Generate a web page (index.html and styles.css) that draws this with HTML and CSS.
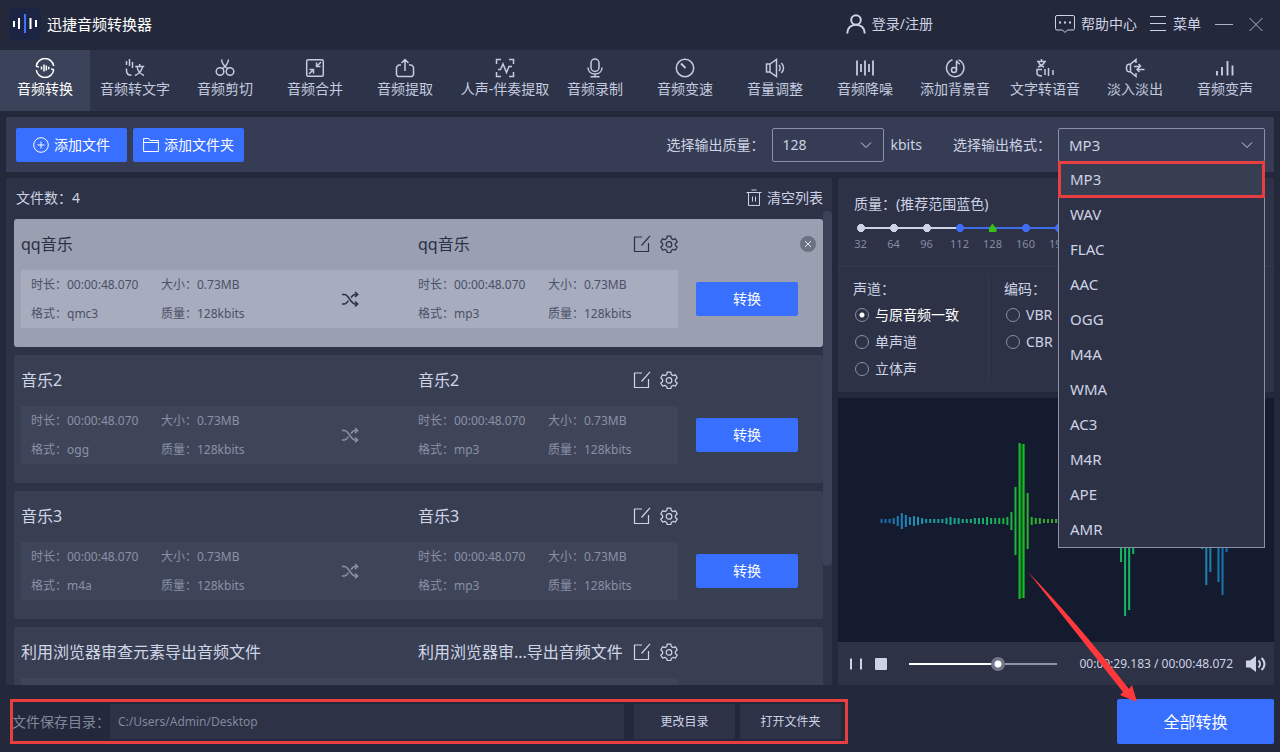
FILE: index.html
```html
<!DOCTYPE html>
<html lang="zh-CN">
  <head>
    <meta charset="utf-8">
    <title>迅捷音频转换器</title>
    <link rel="stylesheet" href="styles.css">
  </head>
  <body>
    <!-- icon sprite -->
    <svg class="sprite" aria-hidden="true">
      <symbol id="i-convert" viewBox="0 0 20 20"><path d="M1.300 8a8.800 8.800 0 0 1 17.400 0M18.700 12a8.800 8.800 0 0 1-17.400 0M1 8.300l2.800.7M19 11.700l-2.800-.7M6.500 8.500v3M9 6.500v7M11.300 7.500v5M13.700 8.700v2.600"/></symbol>
      <symbol id="i-totext" viewBox="0 0 20 20"><path d="M1.500 3v4M4.500 1v7M7.500 4v6M1.500 10.500v2c0 3 1.800 4.800 5 4.800M10.200 8.500h9M14.700 6v2.500M12 8.500c.6 4 3.500 7.500 7 9M17.500 8.500c-.6 4-4 7.500-7.500 9"/></symbol>
      <symbol id="i-cut" viewBox="0 0 20 20"><circle cx="5" cy="13.500" r="3.800"/><circle cx="15" cy="13.500" r="3.800"/><path d="M6.500 1.500c.3 3.500 2.500 6.500 6 9.200M13.500 1.500c-.3 3.500-2.500 6.500-6 9.200"/></symbol>
      <symbol id="i-merge" viewBox="0 0 20 20"><rect x="1.700" y="1.700" width="16.600" height="16.600" rx="1.500"/><path d="M16 4l-4.500 4.500M11.500 4.500v4h4M4 16l4.500-4.500M8.500 15.500v-4h-4"/></symbol>
      <symbol id="i-extract" viewBox="0 0 20 20"><path d="M6 7H3.500L1.500 9v8l1.500 1.500h14l1.500-1.500V9l-2-2H14M10 13V1.500M6.500 5L10 1.500 13.500 5"/></symbol>
      <symbol id="i-vocal" viewBox="0 0 20 20"><path d="M1.500 6V1.500H6M14 1.500h4.500V6M18.500 14v4.500H14M6 18.500H1.500V14M3 11.500h2.500L8 6l3.500 8.500L14 8.500h3"/></symbol>
      <symbol id="i-mic" viewBox="0 0 20 20"><rect x="6" y="1" width="8" height="12.500" rx="4"/><path d="M3 9.500c0 4 3 6.500 7 6.500s7-2.500 7-6.500M10 16v2.500M5.500 18.700h9"/></symbol>
      <symbol id="i-speed" viewBox="0 0 20 20"><circle cx="10" cy="10" r="8.700"/><path d="M10.500 10L6 5.500" stroke-width="2"/></symbol>
      <symbol id="i-volume" viewBox="0 0 20 20"><path d="M5 6L11.500 1.500v17L5 14zM5 6H1.500v8H5M14 7c1.500 1.500 1.500 4.500 0 6M16.300 5c3 3 3 7 0 10"/></symbol>
      <symbol id="i-denoise" viewBox="0 0 20 20"><path d="M2 2.500v15M6 6v8M10 2.500v15M14 6v8M18 2.500v15" stroke-width="1.800"/></symbol>
      <symbol id="i-music" viewBox="0 0 20 20"><path d="M13.500 1.900A8.700 8.700 0 1 1 7.500 1.700M11.500 12V2.500c.5 2 1.500 3 3.500 3.500"/><circle cx="9" cy="12" r="2.500"/></symbol>
      <symbol id="i-tovoice" viewBox="0 0 20 20"><path d="M2 3.500h9M6.500 1v2.500M3.500 3.500c.6 2.500 2.500 4.500 5.500 5.500M9.500 3.500C9 6 6.500 8 3 9M7 11.500H2V15c0 2 1.500 3 5 3M10 11v6M13.500 10v8M18 12v5"/></symbol>
      <symbol id="i-fade" viewBox="0 0 20 20"><path d="M11 5V1.500L5.500 6 3 6.500Q1.500 7 1.500 10T3 13.500l2.500.5 5.500 4.500V15M5.500 6v8M9 8.500h7M13.500 6L16 8.500M19.500 11.500H12M14.500 9L12 11.500l2.500 2.500"/></symbol>
      <symbol id="i-bars" viewBox="0 0 20 20"><path d="M2 13v4.500M7 9v8.500M12.500 3v14.500M17.500 7.500v10" stroke-width="1.900"/></symbol>
      <symbol id="i-edit" viewBox="0 0 18 18"><path d="M9 2H1.500v14.500h14V8M8.500 10.500L17 .8"/></symbol>
      <symbol id="i-gear" viewBox="0 0 18 18"><path d="M7.200 1.200h3.600l.6 2.400 1.600.9 2.400-.7 1.800 3-1.800 1.700v1.900l1.800 1.700-1.800 3-2.400-.7-1.600.9-.6 2.200H7.200l-.6-2.200-1.600-.9-2.400.7-1.800-3 1.800-1.700V8.500L.8 6.800l1.800-3 2.400.7 1.600-.9z"/><circle cx="9" cy="9.400" r="2.800"/></symbol>
      <symbol id="i-shuffle" viewBox="0 0 18 18"><path d="M1 4.500h2.500c4 0 6.500 9.500 10.500 9.500h2.500M1 14h2.500c1.500 0 2.800-1.500 4-3.300M10 7.500c1.200-1.700 2.500-3 4-3h2.500M14 2l2.700 2.500L14 7M14 11.500l2.700 2.500-2.700 2.500"/></symbol>
      <symbol id="i-chevron" viewBox="0 0 12 12"><path d="M1 3.500l5 5 5-5"/></symbol>
    </svg>

    <header class="titlebar">
      <svg class="logo" viewBox="0 0 32 32" aria-hidden="true">
        <rect width="32" height="32" rx="6" fill="#1c2444"/>
        <path d="M5 13v6M10 10v11M21.500 10v11M27 12v7" stroke="#fff" stroke-width="2"/>
        <path d="M16 6v19" stroke="#3d73ff" stroke-width="2"/>
      </svg>
      <h1 class="app-name">迅捷音频转换器</h1>
      <button class="bar-btn login"><svg viewBox="0 0 20 20" stroke-width="2"><circle cx="10" cy="6" r="4.800"/><path d="M1.200 19.500c0-5.500 3.800-8.700 8.800-8.700s8.800 3.200 8.800 8.700"/></svg>登录/注册</button>
      <button class="bar-btn help"><svg viewBox="0 0 20 20"><path d="M2 1.500h16q1.500 0 1.500 1.500v11.500q0 1.500-1.500 1.500h-5.500L10 18.500 7.500 16H2q-1.500 0-1.500-1.500V3q0-1.500 1.500-1.500z"/><path d="M4 8.500h2M9 8.500h2M14 8.500h2" stroke-width="2"/></svg>帮助中心</button>
      <button class="bar-btn menu"><svg viewBox="0 0 18 20"><path d="M1 2.500h16M1 9.500h16M1 16.500h16"/></svg>菜单</button>
      <button class="win-btn" aria-label="最小化"><svg viewBox="0 0 18 18"><path d="M0 9.500h18"/></svg></button>
      <button class="win-btn" aria-label="关闭"><svg viewBox="0 0 18 18"><path d="M2.500 3l13 13M15.500 3l-13 13"/></svg></button>
    </header>

    <nav class="tools">
      <a class="tool active" href="#"><svg><use href="#i-convert"/></svg>音频转换</a>
      <a class="tool" href="#"><svg><use href="#i-totext"/></svg>音频转文字</a>
      <a class="tool" href="#"><svg><use href="#i-cut"/></svg>音频剪切</a>
      <a class="tool" href="#"><svg><use href="#i-merge"/></svg>音频合并</a>
      <a class="tool" href="#"><svg><use href="#i-extract"/></svg>音频提取</a>
      <a class="tool wide" href="#"><svg><use href="#i-vocal"/></svg>人声-伴奏提取</a>
      <a class="tool" href="#"><svg><use href="#i-mic"/></svg>音频录制</a>
      <a class="tool" href="#"><svg><use href="#i-speed"/></svg>音频变速</a>
      <a class="tool" href="#"><svg><use href="#i-volume"/></svg>音量调整</a>
      <a class="tool" href="#"><svg><use href="#i-denoise"/></svg>音频降噪</a>
      <a class="tool" href="#"><svg><use href="#i-music"/></svg>添加背景音</a>
      <a class="tool" href="#"><svg><use href="#i-tovoice"/></svg>文字转语音</a>
      <a class="tool" href="#"><svg><use href="#i-fade"/></svg>淡入淡出</a>
      <a class="tool" href="#"><svg><use href="#i-bars"/></svg>音频变声</a>
    </nav>

    <section class="toolbar">
      <button class="btn add"><svg viewBox="0 0 16 16"><circle cx="8" cy="8" r="7.300"/><path d="M8 4.500v7M4.500 8h7"/></svg>添加文件</button>
      <button class="btn add"><svg viewBox="0 0 16 16"><path d="M.6 14.500V1.500h5l1.500 2h8.300v11zM.6 5.500h14.800"/></svg>添加文件夹</button>
      <label class="out-label first" for="quality">选择输出质量：</label>
      <div class="select quality">
        <select id="quality"><option>128</option></select>
        <svg><use href="#i-chevron"/></svg>
      </div>
      <span class="unit">kbits</span>
      <label class="out-label" for="format">选择输出格式：</label>
      <div class="select format">
        <select id="format"><option>MP3</option></select>
        <svg><use href="#i-chevron"/></svg>
        <ul class="options" role="listbox" aria-label="输出格式">
          <li role="option" aria-selected="true" class="selected">MP3</li>
          <li role="option">WAV</li>
          <li role="option">FLAC</li>
          <li role="option">AAC</li>
          <li role="option">OGG</li>
          <li role="option">M4A</li>
          <li role="option">WMA</li>
          <li role="option">AC3</li>
          <li role="option">M4R</li>
          <li role="option">APE</li>
          <li role="option">AMR</li>
        </ul>
      </div>
    </section>

    <main class="main">
      <section class="files">
        <div class="files-head">
          <span>文件数：4</span>
          <button class="clear"><svg viewBox="0 0 16 18"><path d="M.5 3.500h15M5.500 1h5M2.500 3.500v13h11v-13M6.500 7.500v5M9.500 7.500v5"/></svg>清空列表</button>
        </div>
        <div class="list">
          <article class="card current">
            <div class="card-title">
              <h2 class="name">qq音乐</h2>
              <div class="target">
                <span class="name">qq音乐</span>
                <button class="icon-btn" aria-label="重命名"><svg><use href="#i-edit"/></svg></button>
                <button class="icon-btn" aria-label="设置"><svg><use href="#i-gear"/></svg></button>
              </div>
            </div>
            <button class="close" aria-label="移除"><svg viewBox="0 0 16 16"><path d="M5 5l6 6M11 5l-6 6"/></svg></button>
            <div class="info">
              <div class="meta">
                <span>时长：00:00:48.070</span><span>大小：0.73MB</span>
                <span>格式：qmc3</span><span>质量：128kbits</span>
              </div>
              <svg class="shuffle"><use href="#i-shuffle"/></svg>
              <div class="meta">
                <span>时长：00:00:48.070</span><span>大小：0.73MB</span>
                <span>格式：mp3</span><span>质量：128kbits</span>
              </div>
            </div>
            <button class="btn go">转换</button>
          </article>

          <article class="card">
            <div class="card-title">
              <h2 class="name">音乐2</h2>
              <div class="target">
                <span class="name">音乐2</span>
                <button class="icon-btn" aria-label="重命名"><svg><use href="#i-edit"/></svg></button>
                <button class="icon-btn" aria-label="设置"><svg><use href="#i-gear"/></svg></button>
              </div>
            </div>
            <div class="info">
              <div class="meta">
                <span>时长：00:00:48.070</span><span>大小：0.73MB</span>
                <span>格式：ogg</span><span>质量：128kbits</span>
              </div>
              <svg class="shuffle"><use href="#i-shuffle"/></svg>
              <div class="meta">
                <span>时长：00:00:48.070</span><span>大小：0.73MB</span>
                <span>格式：mp3</span><span>质量：128kbits</span>
              </div>
            </div>
            <button class="btn go">转换</button>
          </article>

          <article class="card">
            <div class="card-title">
              <h2 class="name">音乐3</h2>
              <div class="target">
                <span class="name">音乐3</span>
                <button class="icon-btn" aria-label="重命名"><svg><use href="#i-edit"/></svg></button>
                <button class="icon-btn" aria-label="设置"><svg><use href="#i-gear"/></svg></button>
              </div>
            </div>
            <div class="info">
              <div class="meta">
                <span>时长：00:00:48.070</span><span>大小：0.73MB</span>
                <span>格式：m4a</span><span>质量：128kbits</span>
              </div>
              <svg class="shuffle"><use href="#i-shuffle"/></svg>
              <div class="meta">
                <span>时长：00:00:48.070</span><span>大小：0.73MB</span>
                <span>格式：mp3</span><span>质量：128kbits</span>
              </div>
            </div>
            <button class="btn go">转换</button>
          </article>

          <article class="card">
            <div class="card-title">
              <h2 class="name">利用浏览器审查元素导出音频文件</h2>
              <div class="target">
                <span class="name">利用浏览器审...导出音频文件</span>
                <button class="icon-btn" aria-label="重命名"><svg><use href="#i-edit"/></svg></button>
                <button class="icon-btn" aria-label="设置"><svg><use href="#i-gear"/></svg></button>
              </div>
            </div>
            <div class="info"></div>
          </article>
        </div>
        <div class="scroll-thumb"></div>
      </section>

      <aside class="side">
        <section class="settings">
          <fieldset class="rates">
            <legend>质量：(推荐范围蓝色)</legend>
            <div class="scale">
              <label><input type="radio" name="rate">32</label>
              <label><input type="radio" name="rate">64</label>
              <label><input type="radio" name="rate">96</label>
              <label class="good"><input type="radio" name="rate">112</label>
              <label class="good"><input type="radio" name="rate" checked>128</label>
              <label class="good"><input type="radio" name="rate">160</label>
              <label class="good"><input type="radio" name="rate">192</label>
            </div>
          </fieldset>
          <div class="modes">
            <fieldset class="channel">
              <legend>声道：</legend>
              <label><input type="radio" name="channel" checked>与原音频一致</label>
              <label><input type="radio" name="channel">单声道</label>
              <label><input type="radio" name="channel">立体声</label>
            </fieldset>
            <fieldset class="encode">
              <legend>编码：</legend>
              <label><input type="radio" name="encode">VBR</label>
              <label><input type="radio" name="encode">CBR</label>
            </fieldset>
          </div>
        </section>

        <div class="wave">
          <svg id="wave" viewBox="0 0 436 244">
            <defs>
              <linearGradient id="tone" gradientUnits="userSpaceOnUse" x1="43" y1="0" x2="390" y2="0">
                <stop offset="0" stop-color="#1b68ae"/>
                <stop offset=".07" stop-color="#1b86b8"/>
                <stop offset=".14" stop-color="#1a9fa6"/>
                <stop offset=".26" stop-color="#16ac80"/>
                <stop offset=".36" stop-color="#1bb045"/>
                <stop offset=".4" stop-color="#1cbb2c"/>
                <stop offset=".5" stop-color="#46a331"/>
                <stop offset=".7" stop-color="#14b860"/>
                <stop offset=".93" stop-color="#1c84b0"/>
                <stop offset="1" stop-color="#1a6cb0"/>
              </linearGradient>
            </defs>
            <path d="M183.500 46v154" stroke="#0a5a1c" stroke-width="4"/>
            <path id="bars" stroke="url(#tone)" stroke-width="2"/>
          </svg>
        </div>

        <div class="player">
          <button class="icon-btn" aria-label="暂停"><svg viewBox="0 0 14 14"><path d="M2 1.500v11M12 1.500v11" stroke-width="2"/></svg></button>
          <button class="icon-btn stop" aria-label="停止"><svg viewBox="0 0 14 14"><rect x="1" y="1" width="12" height="12" rx="1"/></svg></button>
          <input class="seek" type="range" min="0" max="100" value="61" aria-label="播放进度">
          <span class="time">00:00:29.183 / 00:00:48.072</span>
          <button class="icon-btn speaker" aria-label="音量"><svg viewBox="0 0 20 16"><path d="M0 4.500h4L10 0v16l-6-4.500H0z" class="cone"/><path d="M12.500 4.500c2 2 2 5 0 7M15.500 2c4 3.500 4 8.500 0 12" stroke-width="2"/></svg></button>
        </div>
      </aside>
    </main>

    <footer class="footer">
      <label class="dir-label" for="dir">文件保存目录：</label>
      <input class="dir" id="dir" type="text" value="C:/Users/Admin/Desktop">
      <button class="flat change">更改目录</button>
      <button class="flat">打开文件夹</button>
      <div class="dir-mark"></div>
      <div class="convert-all">
        <button class="btn all">全部转换</button>
        <svg class="arrow" viewBox="0 0 112 132" aria-hidden="true"><path d="M0 0Q45 46 101 117L104 113 109 130 92 123 95 120Q50 63 0 0z" fill="#ff383b"/></svg>
      </div>
    </footer>

    <script>
      // half height of each bar, one bar every 4px or so
      var heights = [
        2, 2, 2, 3, 5, 8, 6, 4, 5, 4, 3, 2, 2, 2, 2, 2, 3, 4, 3, 3, 2, 2, 2, 3, 3, 3, 4, 3, 3, 3, 3, 4, 9, 34, 78, 77, 28, 4, 3, 3,
        2, 2, 2, 2, 2, 2, 3, 3, 2, 2, 2, 3, 3, 4, 4, 5, 6, 8, 14, 41, 95, 89, 33, 8, 4, 3, 3, 2, 2, 2, 2, 3, 3, 4, 4, 5, 6, 8,
        14, 28, 64, 51, 22, 61, 74, 31, 10, 4
      ];

      document.getElementById('bars').setAttribute('d', heights.map(function (h, i) {
        return 'M' + (43.5 + i * 4.06) + ' ' + (123 - h) + 'v' + h * 2;
      }).join(''));
    </script>
  </body>
</html>
```
FILE: styles.css
```css
*          { box-sizing: border-box; }
body       { background: #23283b; color: #cdd2e4; font: 14px/20px "Noto Sans", "Noto Sans CJK SC", sans-serif; margin: 0; display: flex; flex-direction: column; height: 100vh; min-height: 600px; overflow: hidden; }
button     { font: inherit; color: inherit; background: none; border: 0; padding: 0; cursor: pointer; display: flex; align-items: center; justify-content: center; }
input,
select     { font: inherit; color: inherit; }
svg        { fill: none; stroke: currentColor; flex: none; display: block; }
h1, h2     { margin: 0; font-weight: normal; }
fieldset   { border: 0; margin: 0; padding: 0; min-width: 0; }
legend     { padding: 0; }
.sprite    { display: none; }

/* title bar */
.titlebar     { display: flex; align-items: center; height: 50px; padding: 0 15px 2px 9px; }
.logo         { width: 32px; height: 32px; stroke: none; }
.app-name     { font-size: 15px; line-height: 20px; color: #fff; margin-left: 6px; }
.bar-btn      { gap: 6px; }
.bar-btn svg  { width: 20px; height: 20px; }
.login        { margin-left: auto; }
.help         { margin-left: 122px; }
.menu         { margin-left: 12px; }
.menu svg     { width: 18px; }
.win-btn      { margin-left: 14px; color: #aeb3c6; }
.win-btn svg  { width: 18px; height: 18px; }

/* tool tabs */
.tools      { display: grid; grid-template-columns: repeat(5, 9fr) 10fr repeat(8, 9fr); background: #2d3449; padding-right: 10px; height: 61px; }
.tool       { display: flex; flex-direction: column; align-items: center; padding-top: 8px; color: #c4cadf; text-decoration: none; white-space: nowrap; gap: 1px; }
.tool svg   { width: 20px; height: 20px; stroke-width: 1.5; }
.wide       { padding-left: 10px; }
.active     { background: #3b435a; color: #fff; }

/* output options */
.toolbar       { display: flex; align-items: center; background: #363c53; margin: 6px 6px 0; padding: 0 9px 0 10px; height: 55px; }
.btn           { background: #386fff; color: #fff; border-radius: 2px; }
.add           { width: 111px; height: 34px; gap: 5px; margin-right: 6px; }
.add svg       { width: 16px; height: 16px; }
.first         { margin-left: auto; }
.out-label     { white-space: nowrap; }
.select        { position: relative; height: 34px; margin-left: 7px; }
.select select { appearance: none; background: none; border: 1px solid #8a90a5; border-radius: 2px; width: 100%; height: 100%; padding: 0 10px; outline: 0; }
.select svg    { position: absolute; right: 12px; top: 11px; width: 12px; height: 12px; pointer-events: none; }
.quality       { width: 112px; }
.format        { width: 207px; }
.format select { font-size: 15px; }
.unit          { margin: 0 31px 0 7px; }
.options       { position: absolute; z-index: 5; top: 34px; left: 0; right: 0; margin: 0; padding: 0; list-style: none; background: #2d3247; border: 1px solid #8a90a5; border-top: 0; font-size: 15px; }
.options li    { height: 35px; padding: 0 11px; line-height: 35px; }
.selected      { background: #383e52; outline: 3px solid #e83e42; outline-offset: -2px; }

/* file list */
.main         { display: flex; flex: 1; gap: 6px; min-height: 0; padding: 6px 6px 0; }
.files        { position: relative; display: flex; flex-direction: column; flex: 1; min-width: 0; background: #2d3247; padding: 0 9px 0 8px; }
.files-head   { display: flex; justify-content: space-between; align-items: center; height: 41px; flex: none; padding: 0 0 2px 2px; }
.clear        { gap: 5px; }
.clear svg    { width: 16px; height: 18px; }
.list         { display: flex; flex-direction: column; gap: 8px; flex: 1; overflow: hidden; }
.card         { position: relative; display: grid; grid-template: 50px 58px / 1fr 102px; row-gap: 1px; column-gap: 18px; align-items: center; flex: none; height: 128px; padding: 0 25px 0 7px; background: #393f53; border-radius: 3px; color: #d0d5e6; }
.card-title   { display: grid; grid-template-columns: 397px 1fr; grid-column: 1; font-size: 16px; line-height: 24px; }
.name         { font-size: 16px; white-space: nowrap; }
.target       { display: flex; align-items: center; gap: 9px; }
.target .name { flex: 1; }
.icon-btn svg { width: 18px; height: 18px; stroke-width: 1.2; }
.info         { display: grid; grid-template-columns: 397px 1fr; position: relative; grid-row: 2; height: 58px; background: #3f4559; color: #8a90a5; font-size: 12px; }
.meta         { display: grid; grid-template: 29px 29px / 130px 130px; align-items: center; white-space: nowrap; }
.meta:first-child { padding-left: 10px; }
.shuffle      { position: absolute; left: 320px; top: 20px; width: 18px; height: 18px; stroke-width: 1.5; }
.go           { grid-row: 2; height: 34px; }
.current      { background: #9a9fb2; color: #2a3045; }
.current .info    { background: #a7acbf; color: #4b5166; }
.current .shuffle { color: #2a3045; }
.close        { position: absolute; right: 7px; top: 17px; width: 16px; height: 16px; border-radius: 50%; background: #6d7283; color: #e4e6ee; }
.close svg    { width: 16px; height: 16px; }
.scroll-thumb { position: absolute; top: 33px; right: 0; width: 9px; height: 355px; background: #3b4156; border-radius: 4px; }

/* right column */
.side      { display: flex; flex-direction: column; width: 436px; }
.settings  { background: #2d3247; height: 214px; flex: none; }
.rates     { height: 89px; padding: 16px 6px 0; border-bottom: 1px solid #353b50; }
.rates legend { float: left; padding-left: 10px; line-height: 20px; }
.scale     { clear: both; display: flex; padding-top: 9px; font-size: 11px; line-height: 14px; color: #868ca0; }
.scale label { position: relative; display: flex; flex-direction: column; align-items: center; width: 33px; gap: 4px; }
.scale label + label::before { content: ""; position: absolute; top: 4px; right: 50%; width: 100%; height: 2px; background: #cdd2e4; }
.scale .good + .good::before { background: #3f6de8; }
.scale input { appearance: none; position: relative; z-index: 1; width: 8px; height: 10px; margin: 0; border-radius: 50%; background: radial-gradient(circle, #cdd2e4 4px, transparent 4px); }
.scale .good input { background: radial-gradient(circle, #3f6df5 4px, transparent 4px); }
.scale .good input:checked { background: #39c010; border-radius: 0; clip-path: polygon(50% 5%, 100% 60%, 100% 90%, 0 90%, 0 60%); }
.modes     { display: flex; padding-top: 10px; }
.modes fieldset { height: 106px; padding-left: 15px; }
.modes legend   { float: left; line-height: 24px; }
.modes label    { clear: both; display: flex; align-items: center; gap: 6px; height: 27px; }
.modes input    { appearance: none; width: 14px; height: 14px; margin: 0 0 0 2px; border: 1px solid #8a90a5; border-radius: 50%; }
.modes input:checked { background: radial-gradient(circle, #fff 2px, transparent 3px); }
.modes label:has(:checked) { color: #fff; }
.channel   { width: 151px; border-right: 1px solid #343a4f; }
.wave      { flex: 1; background: #151b2e; margin-top: 6px; min-height: 0; overflow: hidden; }
.wave svg  { width: 100%; }

.player    { display: flex; align-items: center; height: 43px; flex: none; background: #2d3247; padding: 0 8px 0 11px; }
.player .icon-btn svg { width: 14px; height: 14px; stroke-width: 2; }
.stop      { margin: 0 21px 0 11px; }
.stop rect,
.cone      { fill: currentColor; stroke: none; }
.player .speaker svg { width: 20px; height: 16px; }
.seek      { appearance: none; flex: 1; min-width: 0; height: 14px; margin: 0; background: linear-gradient(to right, #fff 60%, #8e93a5 60%) center / 100% 2px no-repeat; }
.seek::-webkit-slider-thumb { appearance: none; width: 14px; height: 14px; border-radius: 50%; background: radial-gradient(circle, #fff 3px, #70758a 4px); }
.time      { font-size: 12px; margin: 0 13px 0 22px; white-space: nowrap; }

/* output directory */
.footer    { position: relative; display: flex; align-items: center; height: 67px; flex: none; padding: 14px 6px 8px 12px; color: #82889c; }
.dir-label { white-space: nowrap; }
.dir       { flex: 1; min-width: 0; max-width: 514px; height: 35px; border: 0; background: #2d3247; font-size: 12px; padding: 0 8px; }
.flat      { width: 101px; height: 35px; background: #2d3247; color: #cdd2e4; font-size: 12px; margin-left: 5px; }
.change    { margin-left: 10px; }
.dir-mark  { position: absolute; left: 10px; top: 14px; width: 838px; height: 45px; border: 3px solid #e83e42; pointer-events: none; }
.convert-all { position: relative; margin-left: auto; }
.all       { width: 157px; height: 45px; font-size: 16px; }
.arrow     { position: absolute; left: -89px; top: -127px; width: 112px; height: 132px; stroke: none; z-index: 6; pointer-events: none; }
```
